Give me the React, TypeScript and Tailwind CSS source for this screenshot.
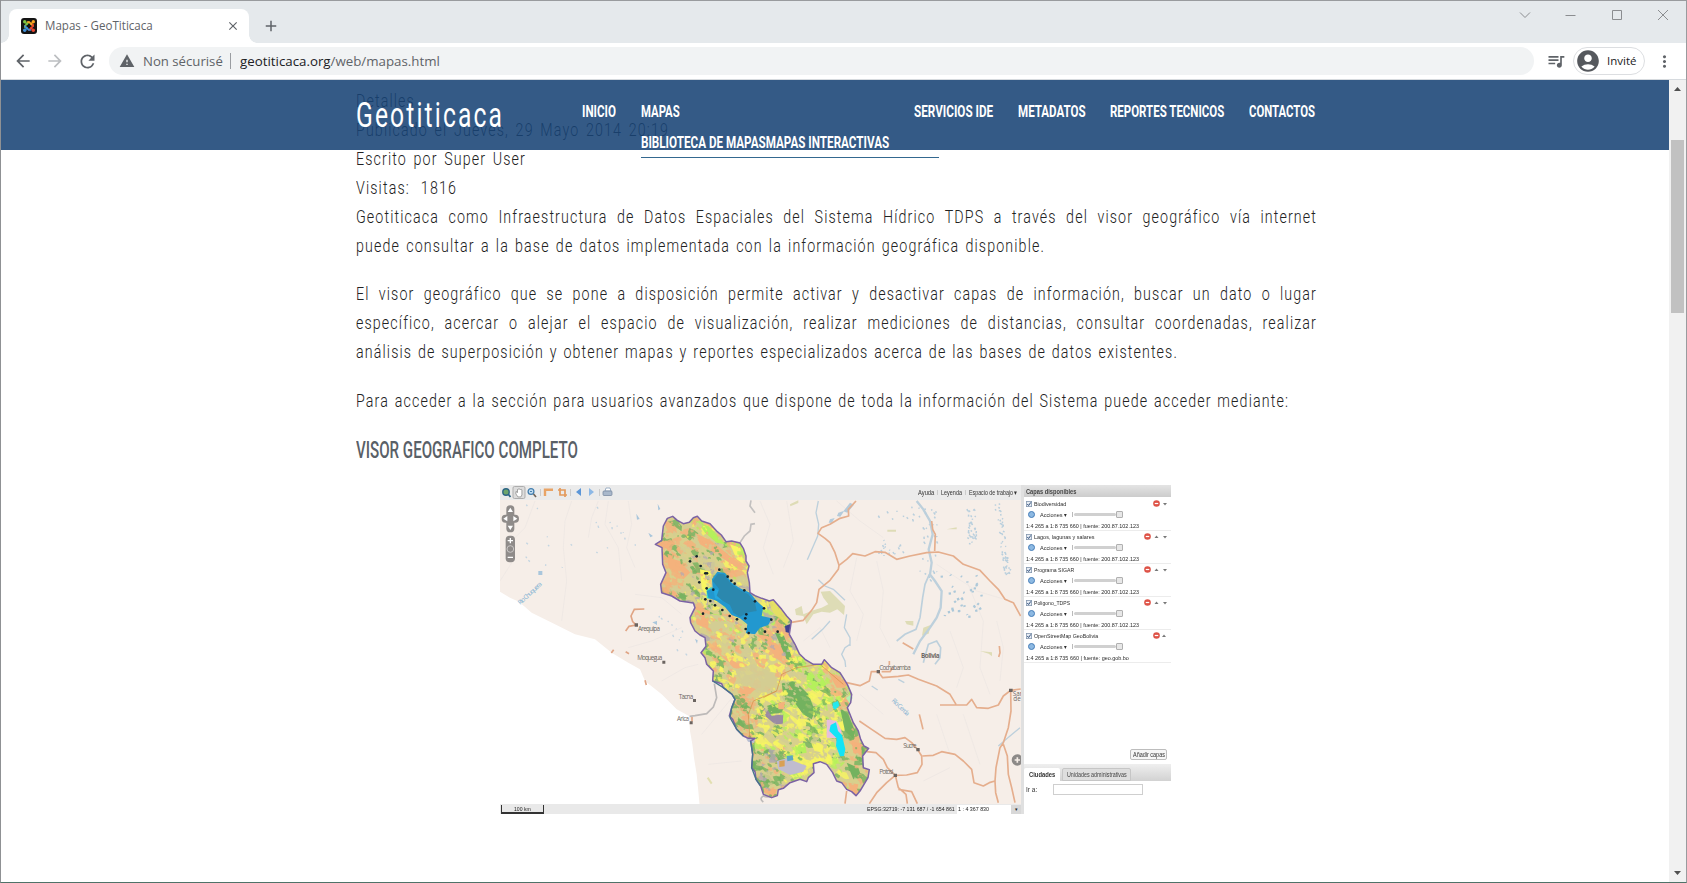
import { useLayoutEffect, useRef, useState, type ReactNode } from "react";
import {
  MdAccountCircle,
  MdAdd,
  MdArrowBack,
  MdArrowForward,
  MdClose,
  MdMoreVert,
  MdQueueMusic,
  MdRefresh,
  MdWarning,
} from "react-icons/md";

/** Single line of text condensed or stretched horizontally to a given width. */
function Fit({ w, className = "", children }: { w: number; className?: string; children: ReactNode }) {
  const ref = useRef<HTMLSpanElement>(null);
  const [scale, setScale] = useState(1);
  useLayoutEffect(() => {
    if (ref.current) setScale(w / ref.current.offsetWidth);
  }, [w]);
  return (
    <span className="block shrink-0 whitespace-nowrap" style={{ width: w }}>
      <span ref={ref} className={"inline-block origin-left " + className} style={{ transform: `scaleX(${scale})` }}>
        {children}
      </span>
    </span>
  );
}

const BODY_SCALE = 0.75;

/** One condensed, justified line of body copy. */
function Line({ w, children }: { w: number; children: ReactNode }) {
  return (
    <div className="h-[29px]" style={{ width: w }}>
      <div
        className="origin-left whitespace-nowrap text-justify [text-align-last:justify]"
        style={{ width: w / BODY_SCALE, transform: `scaleX(${BODY_SCALE})` }}
      >
        {children}
      </div>
    </div>
  );
}

function JoomlaIcon() {
  return (
    <svg viewBox="0 0 16 16" className="h-4 w-4">
      <rect width="16" height="16" rx="3" fill="#141414" />
      <g fill="none" strokeWidth="1.700" strokeLinecap="round" strokeLinejoin="round">
        <path d="M4 9.500V7.800L7.800 4.200" stroke="#7cc242" />
        <path d="M6.500 4L8.300 4.200 12 7.900" stroke="#f5a623" />
        <path d="M12 6.500V8.200L8.200 11.900" stroke="#e8432e" />
        <path d="M9.500 12L7.700 11.800 4 8.100" stroke="#3f8fd8" />
        <path d="M4 4l2 2" stroke="#7cc242" />
        <path d="M12 4l-2 2" stroke="#f5a623" />
        <path d="M4 12l2-2" stroke="#3f8fd8" />
        <path d="M12 12l-2-2" stroke="#e8432e" />
      </g>
      <circle cx="3.700" cy="3.700" r="1.700" fill="#7cc242" />
      <circle cx="12.300" cy="3.700" r="1.700" fill="#f5a623" />
      <circle cx="3.700" cy="12.300" r="1.700" fill="#3f8fd8" />
      <circle cx="12.300" cy="12.300" r="1.700" fill="#e8432e" />
    </svg>
  );
}

function Browser() {
  return (
    <div className="h-[80px] border-b border-[#d6dade] bg-white font-['Open_Sans',sans-serif] text-[#5f6368]">
      <div className="flex h-[43px] items-start justify-between border-t border-[#999b9e] bg-[#e5e9ec]">
        <div className="flex items-start pl-[8px] pt-[8px]">
          <div className="relative flex h-[34px] w-[240px] items-center rounded-t-[8px] bg-white pl-[12px] pr-[9px]">
            <span className="absolute -left-2 bottom-0 h-2 w-2 bg-[radial-gradient(circle_at_0_0,transparent_7.5px,white_8px)]" />
            <span className="absolute -right-2 bottom-0 h-2 w-2 bg-[radial-gradient(circle_at_100%_0,transparent_7.5px,white_8px)]" />
            <JoomlaIcon />
            <div className="ml-[8px] grow text-[12px]">
              <Fit w={108}>Mapas - GeoTiticaca</Fit>
            </div>
            <MdClose className="h-[14px] w-[14px]" />
          </div>
          <MdAdd className="ml-[13px] mt-[8px] h-[18px] w-[18px]" />
        </div>
        <svg viewBox="0 0 170 28" className="h-[28px] w-[170px]" fill="none" stroke="#8b8d90">
          <path d="M4 11.500l5 5 5-5M49.500 14.500h10M96.500 9.500h9v9h-9zM142 9l10 10m0-10l-10 10" />
        </svg>
      </div>
      <div className="flex h-[36px] items-center pl-[12px]">
        <MdArrowBack className="h-5 w-5" />
        <MdArrowForward className="ml-3 h-5 w-5 text-[#bcbec1]" />
        <MdRefresh className="ml-[12px] h-[21px] w-[21px]" />
        <div className="ml-[11px] flex h-[28px] w-[1425px] items-center rounded-full bg-[#f1f3f4] pl-[10px] text-[13.500px]">
          <MdWarning className="h-4 w-4" />
          <div className="ml-[8px]">
            <Fit w={80}>Non sécurisé</Fit>
          </div>
          <span className="ml-[7px] mr-[9px] h-4 w-px bg-[#9a9da1]" />
          <Fit w={200}>
            <span className="text-[#202124]">geotiticaca.org</span>/web/mapas.html
          </Fit>
        </div>
        <MdQueueMusic className="ml-[12px] h-5 w-5" />
        <div className="ml-[7px] flex h-[28px] w-[72px] items-center rounded-full border border-[#dcdee1] pl-px text-[11.500px] text-[#202124]">
          <MdAccountCircle className="h-[26px] w-[26px] text-[#55585d]" />
          <div className="ml-[6px]">
            <Fit w={29}>Invité</Fit>
          </div>
        </div>
        <MdMoreVert className="ml-[10px] h-[19px] w-[19px]" />
      </div>
    </div>
  );
}

function Header() {
  const nav = "block h-[31px] font-bold text-[16px] leading-[31px]";
  return (
    <header className="absolute inset-x-0 top-0 flex h-[70px] bg-[rgba(24,67,117,0.88)] pl-[355px] text-white">
      <div className="w-[226px] pt-[14px] text-[35px] font-normal leading-[44px]">
        <Fit w={148} className="tracking-[3px]">Geotiticaca</Fit>
      </div>
      <nav className="flex pt-[16px]">
        <div className="w-[59px]">
          <Fit w={34} className={nav}>INICIO</Fit>
        </div>
        <div className="w-[273px]">
          <Fit w={39} className={nav}>MAPAS</Fit>
          <div className="h-[31px] w-[298px] border-b border-[#34688f]">
            <Fit w={248} className={nav}>BIBLIOTECA DE MAPASMAPAS INTERACTIVAS</Fit>
          </div>
        </div>
        <div className="w-[104px]">
          <Fit w={79} className={nav}>SERVICIOS IDE</Fit>
        </div>
        <div className="w-[92px]">
          <Fit w={68} className={nav}>METADATOS</Fit>
        </div>
        <div className="w-[139px]">
          <Fit w={114} className={nav}>REPORTES TECNICOS</Fit>
        </div>
        <Fit w={66} className={nav}>CONTACTOS</Fit>
      </nav>
    </header>
  );
}

const BASIN =
  "M82 52L98 46 112 58 130 68 148 64 160 50 172 46 185 60 210 68 232 92 244 102 258 122 275 120 300 126 310 142 318 165 318 180 327 195 322 215 328 245 330 275 345 284 365 292 388 300 400 296 425 325 440 345 454 360 448 400 465 430 478 458 495 475 520 490 545 490 553 476 575 500 600 515 622 550 635 580 632 605 622 620 640 665 655 690 662 715 672 735 686 742 668 765 670 800 688 806 684 830 672 850 660 870 648 884 635 872 620 865 605 845 590 840 578 815 560 790 540 782 520 788 522 815 505 830 500 842 480 835 450 845 430 862 415 866 412 884 395 890 370 880 362 855 348 835 345 812 335 800 338 760 332 720 345 712 325 712 310 705 290 685 278 655 268 645 275 620 285 595 276 580 250 560 245 548 218 540 220 510 200 490 195 470 183 455 198 436 195 410 180 402 165 390 152 365 150 350 165 320 160 306 120 300 95 285 65 275 62 250 78 215 68 190 66 140 46 130 65 118 70 75Z";

const ORANGE = "#f4b27c";
const YELLOW = "#f8f562";
const GREEN = "#74b25f";
const KHAKI = "#d3cd93";
const LIME = "#b5f05c";
const MAUVE = "#b3a9b0";

/** Dominant land-cover mix for a part of the basin. */
function mixAt(x: number, y: number): string[] {
  if (y < 300 && x < 130) return [ORANGE, ORANGE, ORANGE, ORANGE, KHAKI, GREEN];
  if (y < 110) return [ORANGE, ORANGE, ORANGE, LIME, YELLOW, KHAKI];
  if (y < 230 && x > 250) return [ORANGE, ORANGE, YELLOW, KHAKI, LIME];
  if (y < 250) return [GREEN, GREEN, KHAKI, KHAKI, KHAKI, MAUVE, ORANGE];
  if (y < 330) return [GREEN, YELLOW, YELLOW, KHAKI, KHAKI, MAUVE];
  if (y < 420 && x < 300) return [ORANGE, ORANGE, KHAKI, KHAKI, YELLOW, LIME];
  if (y < 460) return [ORANGE, ORANGE, YELLOW, KHAKI, LIME, MAUVE, GREEN];
  if (y < 560 && x < 270) return [GREEN, GREEN, YELLOW, KHAKI, ORANGE];
  if (y < 600 && x > 560) return [ORANGE, ORANGE, LIME, GREEN, KHAKI];
  if (y < 560 && x > 470) return [LIME, LIME, YELLOW, KHAKI, GREEN];
  if (y < 570) return [YELLOW, YELLOW, KHAKI, KHAKI, ORANGE];
  if (x < 350) return [GREEN, GREEN, GREEN, KHAKI, ORANGE, ORANGE];
  if (x > 610) return [GREEN, GREEN, ORANGE, ORANGE, KHAKI];
  if (y > 750 && x < 430) return [GREEN, GREEN, KHAKI, MAUVE, ORANGE];
  return [YELLOW, YELLOW, YELLOW, YELLOW, KHAKI, KHAKI, LIME, GREEN];
}

/** Deterministic pseudo-random source, so the map is drawn the same every time. */
function random(seed: number) {
  let a = seed;
  return () => {
    a = (a + 0x6d2b79f5) | 0;
    let t = Math.imul(a ^ (a >>> 15), 1 | a);
    t = (t + Math.imul(t ^ (t >>> 7), 61 | t)) ^ t;
    return ((t ^ (t >>> 14)) >>> 0) / 4294967296;
  };
}

function landCover(count: number, base: number, seed: number) {
  const rnd = random(seed);
  const out: { d: string; fill: string }[] = [];
  for (let i = 0; i < count; i++) {
    const x = 45 + rnd() * 645;
    const y = 45 + rnd() * 850;
    const mix = mixAt(x + rnd() * 40 - 20, y + rnd() * 40 - 20);
    const fill = mix[Math.floor(rnd() * mix.length)];
    const size = base * (0.4 + rnd());
    const pts: string[] = [];
    for (let k = 0; k < 9; k++) {
      const r = size * (0.3 + rnd());
      const t = (k / 9) * Math.PI * 2;
      const px = Math.cos(t) * r;
      const py = Math.sin(t) * r * 0.75;
      pts.push(`${(x + px - py * 0.4).toFixed(1)} ${(y + py + px * 0.5).toFixed(1)}`);
    }
    out.push({ d: `M${pts.join("L")}Z`, fill });
  }
  return out;
}

function speckles(n: number, x0: number, y0: number, w: number, h: number, slope: number) {
  const rnd = random(n * 977 + x0);
  let d = "";
  for (let i = 0; i < n; i++) {
    const y = rnd() * h;
    const x = x0 + rnd() * w + y * slope;
    d += `M${x.toFixed(0)} ${(y0 + y).toFixed(0)}l${(rnd() * 6 - 1).toFixed(1)} ${(2 + rnd() * 5).toFixed(1)}`;
  }
  return d;
}

const COARSE_COVER = landCover(1300, 17, 41);
const FINE_COVER = landCover(2400, 7, 97);

const TOWNS = [
  [170, 166], [150, 181], [182, 195], [196, 217], [201, 217], [178, 244], [200, 262], [220, 266], [238, 206],
  [263, 227], [274, 239], [284, 248], [313, 268], [345, 301], [372, 322], [394, 356], [196, 295], [211, 300],
  [225, 313], [247, 327], [269, 345], [291, 355], [316, 352], [319, 340], [317, 384], [326, 396], [375, 392],
  [413, 392], [189, 338],
];

function BasinMap() {
  return (
    <svg viewBox="500 499 521 304" className="block h-[304px] w-[521px] bg-[#f6eee8]" fontFamily="Open Sans, sans-serif">
      <defs>
        <clipPath id="basin">
          <path d={BASIN} />
        </clipPath>
      </defs>
      <g transform="translate(495 480) scale(.33333)">
        <path
          d="M0 325L15 332 45 350 72 362 110 395 180 430 240 460 300 475 350 515 400 545 435 565 450 600 500 640 545 685 582 705 585 750 592 790 597 830 605 880 610 930 615 985H0Z"
          fill="#fff"
        />
        <g fill="none" stroke="#ece6e2" strokeWidth="2">
          <path d="M60 230L15 300M120 60L90 140 60 170M230 60L210 120 205 200 215 300 200 420M310 60L290 110 280 170M340 60L330 130 370 200 380 300M400 60L410 130 395 200 420 260M400 500L470 480 560 440M420 340L500 350 560 400M500 600L570 560 610 550M620 760L720 640M640 850L740 840" />
        </g>
        <path
          d={speckles(22, 90, 70, 330, 200, 0) + speckles(12, 470, 380, 60, 140, 0.6)}
          stroke="#c3d5e1"
          strokeWidth="4"
          fill="none"
        />
        <path d="M488 68l8 16-6 4zM460 155l14 10-8 4zM130 270h12v12h-12zM424 98l10 16-8 2zM472 424l14-4v12zM600 474l8 4-2 10z" fill="#a9c6dc" />
        <path d="M768 58L765 75 780 95M780 128L768 130 765 150 748 165 735 185" fill="none" stroke="#c3c0bf" strokeWidth="5" />
        <path d="M658 608L665 650 655 678 635 698 600 704 584 706" fill="none" stroke="#bdbab9" strokeWidth="5" />
        <g fill="none" stroke="#e0a585" strokeWidth="5">
          <path d="M448 384L418 385 408 405 413 422 423 432 402 436 392 450M356 506l-7 10M392 512l10 6M450 598l4 14M591 708v14" />
        </g>
        <g fill="#6b6460">
          <path d="M419 427h10v10h-10zM502 539h9v9h-9zM594 654h9v9h-9zM584 721h9v9h-9z" />
        </g>
        <g fontSize="19" fill="#6f6966">
          <text x="429" y="450" textLength="66">Arequipa</text>
          <text x="427" y="537" textLength="75">Moquegua</text>
          <text x="551" y="653" textLength="44">Tacna</text>
          <text x="546" y="721" textLength="36">Arica</text>
          <text fill="#7fb0d2" textLength="90" transform="translate(76 372) rotate(-43)">Rio Chuquera</text>
        </g>
        <path d="M638 890l12 18" stroke="#e2dfb0" strokeWidth="6" />
      </g>

      <g transform="translate(750 480) scale(.33333)">
        <g fill="none" stroke="#ece6e2" strokeWidth="2">
          <path d="M30 60L60 130 40 200 70 280M110 60L130 180 100 260M260 60L330 120 400 170M320 230L300 330 340 400 320 480M380 240L400 330 390 440 420 500M600 450L640 560 620 620M650 300L700 420 690 560 720 640M740 420L760 500 750 600M560 700L600 820M640 700L690 850M520 900L600 860M330 640L400 700M160 480L210 440 240 500M560 250L680 330 780 360" />
        </g>
        <path
          d="M135 385L155 375 160 400 190 388 215 380 235 370 220 350 212 332 240 330 285 375 282 402 262 385 240 395 215 392 190 400 170 430 160 405 138 402ZM412 146h26v6h-26zM465 420l25 0 0 14-20-4zM520 440l22-8-6 26-20 6zM120 70l25-12v8l-24 10zM590 145l30-6v6zM690 510l36 4v12l-10-8z"
          fill="#dedcb6"
        />
        <g fill="none" stroke="#bdd0dc" strokeWidth="4">
          <path d="M205 60L198 95 206 130 203 165 190 195 172 236M205 296L225 315 250 325 285 358M300 490L285 500 275 520 285 540 287 558M290 400L283 440 300 470 300 495M185 475L218 445 240 420" />
          <path d="M500 60L520 85 540 120 548 160 536 205 545 245 540 280 555 300 575 330 572 380 560 410 540 440 510 480 490 520" strokeWidth="7" />
          <path d="M538 280L525 310 518 350 510 410 498 445 465 460 440 480M520 545L535 490 560 480 572 500 570 530 555 550" strokeWidth="5" />
          <path d="M365 615l18 12M445 595l18 10M810 740L780 765 745 795" />
        </g>
        <path d="M300 65l12 6-20 24-12-4zM265 95l18-6-12 18-10-2zM240 115l14-4-8 14h-10z" fill="#b4cbdb" />
        <path
          d={
            speckles(30, 500, 70, 60, 230, 0.05) +
            speckles(36, 650, 80, 30, 110, 0) +
            speckles(50, 730, 60, 20, 220, 0.15) +
            speckles(18, 380, 175, 80, 50, 0) +
            speckles(10, 360, 70, 150, 60, 0)
          }
          stroke="#b9cfdd"
          strokeWidth="4.500"
          fill="none"
        />
        <path d={speckles(32, 570, 280, 120, 130, 0.1)} stroke="#acc8d9" strokeWidth="7" fill="none" />
        <g fill="none" stroke="#e5ae8d" strokeWidth="5" strokeLinejoin="round">
          <path d="M318 60L295 85 296 105 270 112 240 130 215 140 204 157 225 172 240 185 255 215 267 253" />
          <path d="M120 425L160 418 185 388 200 365 207 325 240 298 265 265 267 253 290 235 308 218 345 225 375 212 405 214 440 235 480 225 530 215 565 213 610 225 640 250 690 268 720 300 745 325 765 355 790 365 812 405" />
          <path d="M545 120L548 145 556 160 554 210M458 485L490 504M748 495L750 515 746 528M508 700L513 720 519 745" />
          <path d="M290 605L330 614 358 600 364 572 385 572 398 590 445 586 475 582 505 595 560 615 600 640 618 670M570 672L650 672 665 655 680 680 715 682 745 672 760 645 782 628 812 624M418 540v12M395 572h25l8-12" />
          <path d="M328 720L365 745 405 772 440 775 465 770 485 785 503 806 515 825 516 850 502 875 470 882 436 883 412 860 400 835 378 815 350 812" />
          <path d="M517 825L550 823 575 812 615 820 640 840 665 865 672 905 700 915 718 905 735 900 738 860 750 800 760 785 775 740 783 690 782 628M735 900L737 935 745 965M760 790L772 825 775 880 785 920 795 965M436 883L410 905 380 935 358 968M436 883L445 920 468 940 472 968M445 925L485 932 502 968M290 930L285 968" />
        </g>
        <path d="M380 567h10v10h-10zM499 801h10v10h-10zM431 878h10v10h-10zM777 623h11v10h-11z" fill="#6b6460" />
        <g fontSize="19" fill="#6f6966">
          <text x="388" y="566" textLength="94">Cochabamba</text>
          <text x="513" y="530" fontWeight="700" textLength="56">Bolivia</text>
          <text x="460" y="801" textLength="40">Sucre</text>
          <text x="388" y="879" textLength="42">Potosi</text>
          <text x="788" y="645">San</text>
          <text x="790" y="661">de</text>
          <text fill="#7fb0d2" textLength="66" transform="translate(424 660) rotate(44)">Rio Cerda</text>
        </g>
        <circle cx="802" cy="837" r="17" fill="#8d8a88" />
        <path d="M802 829v16M794 837h16" stroke="#f6eee8" strokeWidth="5" />
      </g>

      <g transform="translate(640 500) scale(.33333)">
        <path d="M400 885q-20 5-30 0-14 8 0 18" fill="none" stroke="#bdbab9" strokeWidth="5" />
        <g clipPath="url(#basin)">
          <path d={BASIN} fill="#d8d08c" />
          {COARSE_COVER.map((p, i) => (
            <path key={i} d={p.d} fill={p.fill} opacity="0.8" />
          ))}
          <path d="M165 95L215 120 270 165 315 200 325 215 290 200 230 160 180 130Z" fill={ORANGE} />
          <path d="M175 65L205 75 240 110 255 130 230 125 195 95Z" fill={LIME} />
          <path d="M270 130L300 140 312 190 290 175Z" fill={YELLOW} />
          <path d="M85 170L120 180 150 215 130 235 110 210 85 200Z" fill={ORANGE} />
          <path d="M160 315L210 330 205 385 170 370Z" fill={ORANGE} />
          <path d="M205 340L260 345 262 385 225 400 205 380Z" fill={KHAKI} />
          <path d="M345 400L390 405 415 435 430 485 405 470 385 430Z" fill={ORANGE} />
          <path d="M405 395L430 400 460 480 440 475Z" fill={GREEN} />
          <path d="M240 460L300 490 320 510 280 500Z" fill={ORANGE} />
          <path d="M300 555L350 560 330 580 300 575Z" fill={ORANGE} />
          <path d="M500 515L540 520 560 550 530 575 500 555Z" fill={LIME} />
          <path d="M425 545L465 540 505 580 525 630 515 655 490 640 460 600 430 585Z" fill={GREEN} />
          <path d="M465 735L495 725 500 755 470 760Z" fill={LIME} />
          <path d="M380 615L410 605 435 610 425 635 385 640Z" fill={GREEN} />
          <path d="M365 618L382 625 395 645 430 640 428 668 405 670 375 645Z" fill="#9a8ba3" />
          <path d="M600 620L625 640 645 690 640 715 615 690Z" fill={GREEN} />
          <path d="M635 720L665 730 665 770 640 755Z" fill={ORANGE} />
          <path d="M620 785L655 800 665 830 640 835Z" fill={GREEN} />
          <path d="M625 845L655 850 648 880 632 872Z" fill={ORANGE} />
          <path d="M565 515L600 525 618 560 590 560Z" fill={ORANGE} />
          <path d="M370 860L410 865 405 888 375 882Z" fill={ORANGE} />
          <path d="M180 205L215 212 214 240 205 290 185 262Z" fill={YELLOW} />
          {FINE_COVER.map((p, i) => (
            <path key={i} d={p.d} fill={p.fill} opacity="0.75" />
          ))}
          <path d="M285 505L340 490 400 515 410 545 375 575 310 550Z" fill={KHAKI} opacity=".85" />
          <path d="M470 570L505 590 522 630 515 652 490 640 470 610Z" fill={GREEN} opacity=".7" />
          <path d="M415 605L435 602 432 625 415 625Z" fill={ORANGE} />
          <path d="M375 628L395 645 428 642 428 666 405 668 380 645Z" fill="#9a8ba3" opacity=".85" />
          <path d="M560 655L590 660 605 690 600 712 560 710Z" fill="#e6bfdc" />
          <path d="M572 672L588 664 594 690 606 702 616 745 612 765 600 766 588 735 590 712 568 690Z" fill="#12e4f6" />
          <path d="M578 606l16-6 4 14-12 12-8-6z" fill="#25e8ec" />
          <path d="M410 780L440 772 475 785 500 795 490 812 450 822 415 805Z" fill="#c0bccf" />
          <path d="M440 765l18-2 2 14-18 4z" fill="#5da6c4" />
          <path d="M418 780l16-2v18l-16 2z" fill="#d9a054" />
          <path d="M200 265L215 258 218 295 200 292Z" fill="#3fdcc8" />
          <path
            d="M216 235L232 212 255 216 275 245 300 262 330 275 350 300 370 318 365 345 395 352 385 372 360 380 345 400 318 396 322 370 300 352 275 342 255 318 230 300 205 290 200 270 218 262Z"
            fill="#2298cf"
          />
          <path
            d="M218 240L234 218 252 220 274 250 300 268 325 280 345 305 350 330 320 335 300 348 280 335 270 312 240 295 225 280 238 265Z"
            fill="#2b88ae"
          />
          <path d="M220 262L236 268 230 284 248 300 225 292Z" fill="#25a8df" />
          <path d="M385 300L400 300 448 350 440 372 400 335Z" fill="#e8e35a" opacity=".8" />
          <path d="M435 375l16-6v28l-14-4z" fill="#41408e" />
          <path d="M370 590L410 570 425 520 470 500 540 490 610 550M330 720L325 640 340 600 410 570" fill="none" stroke="#d58f4c" strokeWidth="3" opacity=".7" />
        </g>
        <path d="M318 712h28l-4 14-18-4z" fill="#b9bfd2" />
        <path d="M630 582l8 8-8 18-12-16z" fill="#b2efad" />
        <path d={BASIN} fill="none" stroke="#7b62a5" strokeWidth="4.500" strokeLinejoin="round" />
        <path d="M218 540L250 560 276 580 285 595 275 620 270 650 290 685 310 705M332 720L338 760 335 800 348 835 362 855" fill="none" stroke="#46748c" strokeWidth="4" />
        {TOWNS.map(([x, y], i) => (
          <circle key={i} cx={x} cy={y} r="4" fill="#15242c" />
        ))}
      </g>

      <g fill="#8f8b89" transform="translate(495 480) scale(.33333)">
        <path d="M34 84q0-11 12-11t12 11v17h3q11 0 11 12t-11 12h-3v18q0 11-12 11t-12-11v-18h-3q-11 0-11-12t11-12h3z" />
        <rect x="32" y="164" width="28" height="80" rx="12" />
        <g fill="#fff">
          <path d="M46 80l8 13H38zM46 147l8-13H38zM25 113l12-8v16zM67 113l-12-8v16z" />
          <path d="M38 177h6v-6h4v6h6v4h-6v6h-4v-6h-6zM38 227h16v4H38z" />
        </g>
        <circle cx="46" cy="204" r="10" fill="none" stroke="#c9c6c5" strokeWidth="3" />
      </g>
    </svg>
  );
}

function ViewerToolbar() {
  return (
    <div className="flex h-[15px] items-center justify-between bg-[#ebebeb] pl-px pr-[3px] text-[6.500px] text-[#333]">
      <svg viewBox="0 0 115 15" className="h-[15px] w-[115px]" fill="none">
        <rect x="12" y="1.500" width="12" height="12" rx="1.500" fill="#dcdcdc" stroke="#adadad" />
        <circle cx="5" cy="7" r="3.200" fill="#6da56b" stroke="#2c6585" strokeWidth="1.400" />
        <path d="M7.500 9.500l2 2.500" stroke="#2c6585" strokeWidth="1.800" />
        <path d="M15 6.500l1.500 1V4.500q.8-1 1.500 0 .8-1 1.500 0 .8-.6 1.400.4v5l-1 2h-3l-2-3z" fill="#fff" stroke="#6f6f6f" strokeWidth=".6" />
        <circle cx="30" cy="6.500" r="2.900" fill="#c2dcf0" stroke="#447fae" strokeWidth="1.300" />
        <path d="M32.500 9l2.500 3" stroke="#6e6258" strokeWidth="1.600" />
        <path d="M29 6.500h2" stroke="#447fae" />
        <path d="M39.500 4v7M69.500 4v7M98.500 4v7" stroke="#ccc" />
        <path d="M44 11V4.700h8" stroke="#e9a466" strokeWidth="2.400" />
        <path d="M57 5h7v7M59 3v7h7" stroke="#e39a5c" strokeWidth="1.700" />
        <path d="M80 3v8l-5-4z" fill="#5b96d8" />
        <path d="M88 3v8l5-4z" fill="#8cb8e6" />
        <path d="M104 6l1-3h4l1 3z" fill="#fff" stroke="#7d95b2" strokeWidth=".7" />
        <rect x="102" y="6" width="9" height="4.500" rx="1" fill="#a9b8cb" stroke="#71839b" strokeWidth=".7" />
      </svg>
      <div className="flex items-center">
        <Fit w={16}>Ayuda</Fit>
        <span className="mx-[3px] h-[5px] w-px bg-[#ccc]" />
        <Fit w={21}>Leyenda</Fit>
        <span className="mx-[3px] h-[5px] w-px bg-[#ccc]" />
        <Fit w={49}>Espacio de trabajo ▾</Fit>
      </div>
    </div>
  );
}

function Layer({ name, w, source, sourceW, up, down }: { name: string; w: number; source: string; sourceW: number; up: boolean; down: boolean }) {
  return (
    <div className="flex h-[33px] flex-col border-b border-[#ececec] pl-[2px] text-[6.200px] leading-[11px] text-[#2c2c2c]">
      <div className="flex h-[11px] items-center pr-[3px]">
        <svg viewBox="0 0 6 6" className="mr-[1.500px] h-[6px] w-[6px]">
          <rect x=".4" y=".4" width="5.200" height="5.200" fill="#e6ecf4" stroke="#8497ae" strokeWidth=".8" />
          <path d="M1.300 3l1.300 1.500L4.800 1.400" fill="none" stroke="#32517c" />
        </svg>
        <div className="grow">
          <Fit w={w}>{name}</Fit>
        </div>
        <svg viewBox="0 0 8 8" className="h-[7px] w-[7px]">
          <circle cx="4" cy="4" r="3.800" fill="#de5347" />
          <path d="M2 4h4" stroke="#fff" strokeWidth="1.400" />
        </svg>
        <svg viewBox="0 0 17 6" className={up && down ? "h-[6px] w-[17px]" : "h-[6px] w-[8px]"} preserveAspectRatio="xMaxYMid slice">
          {up && <path d={down ? "M3.500 4l2-2.500 2 2.500z" : "M11 4l2-2.500 2 2.500z"} fill="#777" />}
          {down && <path d="M12 2l2 2.500 2-2.500z" fill="#777" />}
        </svg>
      </div>
      <div className="flex h-[11px] items-center pl-[2px]">
        <span className="h-[7px] w-[7px] rounded-full border border-[#467db8] bg-[#8db9e2]" />
        <div className="ml-[5px]">
          <Fit w={27}>Acciones ▾</Fit>
        </div>
        <span className="ml-[5px] h-[5px] w-px bg-[#bbb]" />
        <span className="ml-px h-[3px] w-[42px] rounded-full bg-[#d0d0d0]" />
        <span className="h-[7px] w-[7px] rounded-[1px] border border-[#b0b0b0] bg-[#e7e7e7]" />
      </div>
      <div className="h-[11px]">
        <Fit w={sourceW}>1:4 265 a 1:8 735 660 | fuente: {source}</Fit>
      </div>
    </div>
  );
}

function SidePanel() {
  return (
    <div className="flex w-[147px] flex-col bg-white">
      <div className="flex h-[12px] items-center bg-linear-to-b from-[#e4e4e4] to-[#cccccc] pl-[2px] text-[6.500px] font-bold text-[#444]">
        <Fit w={50}>Capas disponibles</Fit>
      </div>
      <div className="pt-[1px]">
        <Layer name="Biodiversidad" w={32} source="200.87.102.123" sourceW={113} up={false} down />
        <Layer name="Lagos, lagunas y salares" w={60} source="200.87.102.123" sourceW={113} up down />
        <Layer name="Programa SIGAR" w={40} source="200.87.102.123" sourceW={113} up down />
        <Layer name="Poligono_TDPS" w={36} source="200.87.102.123" sourceW={113} up down />
        <Layer name="OpenStreetMap GeoBolivia" w={64} source="geo.gob.bo" sourceW={103} up down={false} />
      </div>
      <div className="flex grow items-end justify-end pb-[4px] pr-[4px]">
        <div className="flex h-[11px] w-[37px] items-center justify-center rounded-[2px] border border-[#bdbdbd] bg-[#f6f6f6] text-[6.500px] text-[#333]">
          <Fit w={32}>Añadir capas</Fit>
        </div>
      </div>
      <div className="flex h-[17px] items-end gap-[2px] bg-linear-to-b from-[#efefef] to-[#d2d2d2] text-[6.500px] text-[#444]">
        <div className="flex h-[13px] w-[36px] items-center justify-center rounded-t-[2px] bg-white font-bold text-[#333]">
          <Fit w={26}>Ciudades</Fit>
        </div>
        <div className="flex h-[13px] w-[69px] items-center justify-center rounded-t-[2px] border border-[#c6c6c6] bg-[#dedede]">
          <Fit w={60}>Unidades administrativas</Fit>
        </div>
      </div>
      <div className="flex h-[33px] items-start pl-[2px] pt-[3px] text-[6.500px] leading-[11px] text-[#333]">
        <div className="w-[27px]">
          <Fit w={11}>Ir a:</Fit>
        </div>
        <div className="h-[11px] w-[90px] border border-[#cfcfcf] bg-white" />
      </div>
    </div>
  );
}

function Viewer() {
  return (
    <div className="ml-[144px] flex h-[329px] w-[671px] font-['Liberation_Sans',sans-serif] blur-[0.5px]">
      <div className="flex w-[521px] flex-col">
        <ViewerToolbar />
        <BasinMap />
        <div className="flex h-[10px] items-center justify-between bg-[#e9e9e9] text-[6px] leading-[9px] text-[#222]">
          <div className="ml-px flex h-[9px] w-[43px] justify-center border-x border-b-2 border-[#333]">
            <Fit w={17}>100 km</Fit>
          </div>
          <div className="flex items-center">
            <Fit w={88}>EPSG:32719: -7 131 687 / -1 654 861</Fit>
            <div className="ml-[2px] flex h-[9px] w-[54px] items-center bg-white pl-px">
              <Fit w={31}>1 : 4 367 830</Fit>
            </div>
            <span className="flex h-[9px] w-[10px] items-center justify-center bg-[#d8d8d8] text-[5px]">▾</span>
          </div>
        </div>
      </div>
      <div className="w-[3px] bg-[#e0e0e0]" />
      <SidePanel />
    </div>
  );
}

function Article() {
  return (
    <article className="pl-[355px] pt-[6px] text-[19px] font-light leading-[29px] tracking-[1.500px] text-[#222]">
      <Line w={61}>Detalles</Line>
      <Line w={313}>Publicado el Jueves, 29 Mayo 2014 20:19</Line>
      <Line w={170}>Escrito por Super User</Line>
      <Line w={101}>Visitas: 1816</Line>
      <Line w={961}>Geotiticaca como Infraestructura de Datos Espaciales del Sistema Hídrico TDPS a través del visor geográfico vía internet</Line>
      <Line w={689}>puede consultar a la base de datos implementada con la información geográfica disponible.</Line>
      <div className="h-[19px]" />
      <Line w={961}>El visor geográfico que se pone a disposición permite activar y desactivar capas de información, buscar un dato o lugar</Line>
      <Line w={961}>específico, acercar o alejar el espacio de visualización, realizar mediciones de distancias, consultar coordenadas, realizar</Line>
      <Line w={822}>análisis de superposición y obtener mapas y reportes especializados acerca de las bases de datos existentes.</Line>
      <div className="h-5" />
      <Line w={933}>Para acceder a la sección para usuarios avanzados que dispone de toda la información del Sistema puede acceder mediante:</Line>
      <h2 className="mt-[21px] h-[49px] text-[23px] font-medium tracking-normal text-[#596067]">
        <Fit w={222}>VISOR GEOGRAFICO COMPLETO</Fit>
      </h2>
      <div className="font-normal tracking-normal">
        <Viewer />
      </div>
    </article>
  );
}

function Scrollbar() {
  return (
    <div className="flex w-[17px] flex-col items-center bg-[#f1f1f1]">
      <svg viewBox="0 0 17 17" className="h-[17px] w-[17px]">
        <path d="M5 11l3.500-4 3.500 4z" fill="#505050" />
      </svg>
      <div className="mt-[43px] h-[173px] w-[13px] bg-[#c1c1c1]" />
      <svg viewBox="0 0 17 17" className="mt-auto h-[17px] w-[17px]">
        <path d="M5 6l3.500 4L12 6z" fill="#505050" />
      </svg>
    </div>
  );
}

export default function App() {
  return (
    <div className="flex h-[883px] w-[1687px] flex-col overflow-hidden border-b border-l border-r border-b-[#4f7268] border-l-[#8f9194] border-r-[#999b9e] bg-white">
      <Browser />
      <div className="flex min-h-0 grow font-['Roboto',sans-serif]">
        <main className="relative grow overflow-hidden bg-white">
          <Article />
          <Header />
        </main>
        <Scrollbar />
      </div>
    </div>
  );
}
